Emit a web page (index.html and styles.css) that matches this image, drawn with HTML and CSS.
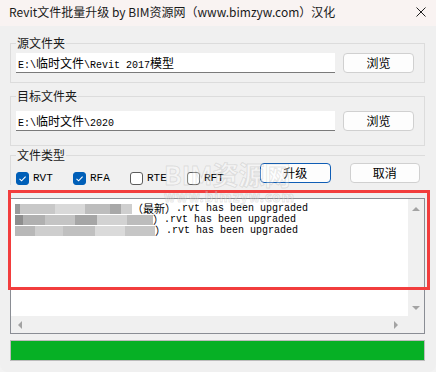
FILE: index.html
```html
<!DOCTYPE html>
<html lang="zh-CN">
<head>
    <meta charset="UTF-8">
    <title>Revit文件批量升级</title>
    <link rel="stylesheet" href="styles.css">
</head>
<body>
    <div class="window">
        <div class="titlebar">
            <span class="title">Revit文件批量升级 by BIM资源网（www.bimzyw.com）汉化</span>
            <svg class="close" width="10" height="10" viewBox="0 0 10 10">
                <path d="M0.5 0.5 L9.5 9.5 M9.5 0.5 L0.5 9.5" stroke="#1f1f1f" stroke-width="1"/>
            </svg>
        </div>

        <div class="main">
            <fieldset class="group g1">
                <legend>源文件夹</legend>
                <div class="row">
                    <div class="path">E:\<span class="cj">临时文件</span>\Revit 2017<span class="cj">模型</span></div>
                    <button class="btn">浏览</button>
                </div>
            </fieldset>

            <fieldset class="group g2">
                <legend>目标文件夹</legend>
                <div class="row">
                    <div class="path">E:\<span class="cj">临时文件</span>\2020</div>
                    <button class="btn">浏览</button>
                </div>
            </fieldset>

            <fieldset class="group g3">
                <legend>文件类型</legend>
                <div class="type-row">
                    <div class="checks">
                        <label class="chk"><span class="box on"><svg width="13" height="13" viewBox="0 0 13 13"><path d="M3.5 6.8 L5.6 8.8 L9.6 4.6" fill="none" stroke="#fff" stroke-width="1.1"/></svg></span>RVT</label>
                        <label class="chk"><span class="box on"><svg width="13" height="13" viewBox="0 0 13 13"><path d="M3.5 6.8 L5.6 8.8 L9.6 4.6" fill="none" stroke="#fff" stroke-width="1.1"/></svg></span>RFA</label>
                        <label class="chk"><span class="box"></span>RTE</label>
                        <label class="chk"><span class="box"></span>RFT</label>
                    </div>
                    <button class="btn primary">升级</button>
                    <button class="btn">取消</button>
                </div>
            </fieldset>

            <div class="log-wrap">
                <div class="log">
                    <div class="log-text">
                        <div class="line"><span class="mask m1"></span><span class="cj">（最新）</span>.rvt has been upgraded</div>
                        <div class="line"><span class="mask m2"></span><span class="cj">）</span>.rvt has been upgraded</div>
                        <div class="line"><span class="mask m3"></span><span class="cj">）</span>.rvt has been upgraded</div>
                    </div>
                    <div class="vscroll">
                        <span class="arrow up"></span>
                        <span class="arrow down"></span>
                    </div>
                    <div class="hscroll">
                        <span class="arrow left"></span>
                        <span class="arrow right"></span>
                    </div>
                    <div class="corner"></div>
                </div>
                <!-- red highlight drawn over the log -->
                <div class="highlight"></div>
            </div>

            <div class="progress">
                <div class="bar" style="width: 100%;"></div>
            </div>
        </div>

        <div class="watermark">BIM资源网<span>www.bimzyw.com</span></div>
    </div>
</body>
</html>
```

FILE: styles.css
```css
* {
    margin: 0;
    padding: 0;
    box-sizing: border-box;
}

body {
    font-family: 'Noto Sans CJK SC', sans-serif;
    font-size: 12px;
    color: #1a1a1a;
    background: #f3f3f3;
}

.window {
    position: relative;
    width: 436px;
    height: 372px;
    background: #f0f0f0;
    border-radius: 0 0 8px 8px;
    overflow: hidden;
}

/* Title bar */
.titlebar {
    height: 26px;
    background: #f9f3f2;
    display: flex;
    align-items: center;
    justify-content: space-between;
    padding: 0 10px 0 9px;
}

.title {
    font-size: 12px;
    line-height: 16px;
    color: #1a1a1a;
    margin-top: -2px;
}

.close {
    display: block;
    margin-top: -3px;
}

/* Groups */
.main {
    padding: 0 11px 0 10px;
}

.group {
    border: 1px solid #dcdcdc;
    padding: 0 5px;
    min-width: 0;
}

.group legend {
    font-size: 12px;
    line-height: 16px;
    padding: 0 1px;
    color: #1a1a1a;
}

.g1 {
    margin-top: 9px;
    padding-top: 2px;
    padding-bottom: 9px;
}

.g2 {
    margin-top: 5px;
    padding-top: 7px;
    padding-bottom: 14px;
}

.g3 {
    margin-top: 1px;
    border-right: none;
    border-bottom: none;
    padding-bottom: 0;
}

.row {
    display: flex;
    align-items: center;
}

.path {
    flex: 0 0 319px;
    height: 20px;
    background: #fff;
    border-bottom: 1px solid #7a7a7a;
    font-family: 'Liberation Mono', 'Noto Sans CJK SC', monospace;
    font-size: 10px;
    line-height: 20px;
    padding-left: 2px;
    white-space: nowrap;
    color: #000;
}

.cj {
    font-family: 'Noto Sans CJK SC', sans-serif;
    font-size: 12px;
}

.btn {
    width: 71px;
    height: 20px;
    margin-left: 8px;
    background: #fdfdfd;
    border: 1px solid #d0d0d0;
    border-radius: 4px;
    font-family: 'Noto Sans CJK SC', sans-serif;
    font-size: 12px;
    line-height: 16px;
    color: #000;
}

.btn.primary {
    border-color: #0f5db5;
    margin-left: 0;
}

/* File types */
.type-row {
    display: flex;
    align-items: flex-start;
}

.type-row .btn + .btn {
    margin-left: 19px;
}

.checks {
    width: 246px;
    display: flex;
    margin-top: 9px;
}

.chk {
    width: 57px;
    display: flex;
    align-items: center;
    gap: 4px;
    font-family: 'Liberation Mono', monospace;
    font-size: 11px;
    line-height: 13px;
    color: #000;
}

.box {
    width: 13px;
    height: 13px;
    border: 1px solid #5c5c5c;
    border-radius: 3px;
    background: #fff;
    display: block;
}

.box.on {
    background: #005fb8;
    border-color: #005fb8;
}

.box svg {
    display: block;
    margin: -1px;
}

/* Log list */
.log-wrap {
    position: relative;
    margin-top: 13px;
}

.log {
    height: 136px;
    border: 1px solid #8a8d94;
    background: #f0f0f0;
    display: grid;
    grid-template-columns: 1fr 16px;
    grid-template-rows: 1fr 17px;
}

.log-text {
    background: #fff;
    padding: 4px 0 0 4px;
    font-family: 'Liberation Mono', 'Noto Sans CJK SC', monospace;
    font-size: 10px;
    line-height: 11px;
    color: #000;
    white-space: nowrap;
    overflow: hidden;
}

.log-text .cj {
    font-size: 11px;
    line-height: 11px;
}

.line {
    height: 11px;
    display: flex;
    align-items: center;
}

.mask {
    display: inline-block;
    height: 10px;
}

.m1 {
    width: 117px;
    background: linear-gradient(90deg, #9a9a9a 0 5px, #c8c8c8 5px 40px, #d9d9d9 40px 70px, #bdbdbd 70px 95px, #a8a8a8 95px 106px, #cfcfcf 106px);
}

.m2 {
    width: 138px;
    background: linear-gradient(90deg, #8e8e8e 0 8px, #b0b0b0 8px 30px, #c4c4c4 30px 60px, #a6a6a6 60px 82px, #d2d2d2 82px 112px, #bcbcbc 112px);
}

.m3 {
    width: 140px;
    background: linear-gradient(90deg, #b8b8b8 0 20px, #cecece 20px 48px, #c0c0c0 48px 80px, #dadada 80px 110px, #c6c6c6 110px);
}

.vscroll {
    display: flex;
    flex-direction: column;
    justify-content: space-between;
    align-items: center;
    padding: 8px 0 6px;
}

.hscroll {
    display: flex;
    justify-content: space-between;
    align-items: center;
    padding: 0 10px 0 7px;
}

.corner {
    background: #f0f0f0;
}

.arrow {
    width: 0;
    height: 0;
    display: block;
}

.arrow.up {
    border-left: 4px solid transparent;
    border-right: 4px solid transparent;
    border-bottom: 4px solid #a3a3a3;
}

.arrow.down {
    border-left: 4px solid transparent;
    border-right: 4px solid transparent;
    border-top: 4px solid #a3a3a3;
}

.arrow.left {
    border-top: 4px solid transparent;
    border-bottom: 4px solid transparent;
    border-right: 4px solid #a3a3a3;
}

.arrow.right {
    border-top: 4px solid transparent;
    border-bottom: 4px solid transparent;
    border-left: 4px solid #a3a3a3;
}

.highlight {
    position: absolute;
    top: -8px;
    left: -2px;
    right: -5px;
    height: 100px;
    border: 3px solid #f23d3d;
    pointer-events: none;
}

/* Progress */
.progress {
    margin-top: 6px;
    height: 21px;
    border: 1px solid #bcbcbc;
    background: #e6e6e6;
}

.bar {
    height: 100%;
    background: #06b025;
}

/* faint watermark over the dialog */
.watermark {
    position: absolute;
    left: 164px;
    top: 158px;
    font-size: 26px;
    font-weight: bold;
    line-height: 32px;
    color: rgba(255, 255, 255, 0.3);
    -webkit-text-stroke: 1px rgba(120, 120, 120, 0.18);
    pointer-events: none;
}

.watermark span {
    display: block;
    font-size: 13px;
    line-height: 14px;
    letter-spacing: 1px;
}
```
